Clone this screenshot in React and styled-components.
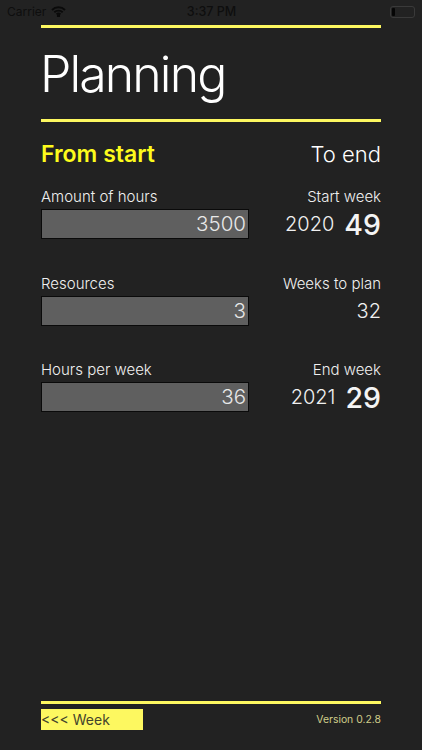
import React from "react";
import styled, { createGlobalStyle } from "styled-components";

const Global = createGlobalStyle`
  html, body { margin: 0; padding: 0; background: #222222; }
  body { font-family: Inter, "Liberation Sans", sans-serif; }
`;

const Screen = styled.div`
  width: 422px;
  height: 750px;
  background: #222222;
  display: flex;
  flex-direction: column;
  overflow: hidden;
`;

const StatusBar = styled.div`
  height: 25px;
  flex: none;
  padding: 0 6px 2px 7px;
  box-sizing: border-box;
  display: grid;
  grid-template-columns: 1fr auto 1fr;
  align-items: center;
  font-size: 12px;
  color: #0e0e0e;
`;

const StatusLeft = styled.div`
  display: flex;
  align-items: center;
  gap: 5px;
`;

const StatusRight = styled.div`
  display: flex;
  justify-content: flex-end;
`;

const Clock = styled.div`
  font-weight: 500;
  font-size: 12.5px;
`;

const Battery = styled.div`
  width: 21px;
  height: 8px;
  border: 1px solid #3a3a3a;
  border-radius: 3px;
  padding: 1px;
  display: flex;
  margin-right: 1px;
  &::before {
    content: "";
    width: 3px;
    background: #050505;
    border-radius: 1px;
  }
`;

const Content = styled.div`
  flex: 1;
  padding: 0 41px;
  display: flex;
  flex-direction: column;
`;

const Rule = styled.div`
  height: 3px;
  flex: none;
  background: #fdf860;
`;

const Title = styled.h1`
  margin: 0 0 0 -1px;
  height: 91px;
  display: flex;
  align-items: center;
  font-size: 50px;
  font-weight: 300;
  color: #ffffff;
  letter-spacing: -1.9px;
`;

const Tabs = styled.div`
  display: flex;
  justify-content: space-between;
  align-items: center;
  height: 24px;
  margin-top: 20px;
`;

const Tab = styled.div`
  font-size: ${(p) => (p.$active ? "23px" : "22px")};
  font-weight: ${(p) => (p.$active ? 600 : 300)};
  color: ${(p) => (p.$active ? "#fdfb1c" : "#ffffff")};
`;

const Rows = styled.div`
  display: flex;
  flex-direction: column;
  gap: 36.5px;
  margin-top: 22px;
`;

const Row = styled.div`
  display: grid;
  grid-template-columns: 208px 1fr;
  height: 50px;
`;

const Col = styled.div`
  display: flex;
  flex-direction: column;
  gap: 3px;
`;

const Label = styled.div`
  font-size: 15px;
  font-weight: 300;
  line-height: 18px;
  color: #f0f0f0;
  text-align: ${(p) => (p.$right ? "right" : "left")};
`;

const Field = styled.div`
  height: 28px;
  background: #5f5f5f;
  border: 1px solid #0a0a0a;
  color: #e8e8e8;
  font-size: 20.5px;
  font-weight: 300;
  line-height: 28px;
  text-align: right;
  padding-right: 2px;
`;

const Value = styled.div`
  height: 30px;
  display: flex;
  justify-content: flex-end;
  align-items: center;
  gap: 10px;
  color: #f0f0f0;
`;

const Year = styled.span`
  font-size: 20px;
  font-weight: 300;
`;

const Week = styled.span`
  font-size: 28.5px;
  font-weight: 500;
  color: #f4f4f4;
`;

const Spacer = styled.div`
  flex: 1;
`;

const Footer = styled.div`
  flex: none;
  margin-bottom: 20px;
`;

const FooterRow = styled.div`
  margin-top: 5px;
  display: flex;
  justify-content: space-between;
  align-items: center;
`;

const WeekButton = styled.div`
  width: 102px;
  height: 21px;
  background: #fdf860;
  color: #44442c;
  font-size: 14px;
  font-weight: 400;
  line-height: 21px;
`;

const Version = styled.div`
  font-size: 10.4px;
  color: #d0cd8a;
`;

const Wifi = () => (
  <svg width="15" height="11" viewBox="0 0 15 11" fill="none" stroke="#0a0a0a" strokeWidth="1.9">
    <path d="M1 4 A9.2 9.2 0 0 1 14 4" />
    <path d="M3.3 6.3 A6 6 0 0 1 11.7 6.3" />
    <path d="M5.5 8.4 A2.9 2.9 0 0 1 9.5 8.4" />
    <circle cx="7.5" cy="9.8" r="0.7" fill="#0a0a0a" />
  </svg>
);

const rows = [
  { label: "Amount of hours", field: "3500", right: "Start week", year: "2020", week: "49" },
  { label: "Resources", field: "3", right: "Weeks to plan", plain: "32" },
  { label: "Hours per week", field: "36", right: "End week", year: "2021", week: "29" },
];

export default function App() {
  return (
    <Screen>
      <Global />
      <StatusBar>
        <StatusLeft>
          Carrier <Wifi />
        </StatusLeft>
        <Clock>3:37 PM</Clock>
        <StatusRight>
          <Battery />
        </StatusRight>
      </StatusBar>
      <Content>
        <Rule />
        <Title>Planning</Title>
        <Rule />
        <Tabs>
          <Tab $active>From start</Tab>
          <Tab>To end</Tab>
        </Tabs>
        <Rows>
          {rows.map((r) => (
            <Row key={r.label}>
              <Col>
                <Label>{r.label}</Label>
                <Field>{r.field}</Field>
              </Col>
              <Col>
                <Label $right>{r.right}</Label>
                <Value>
                  {r.plain ? (
                    <Year>{r.plain}</Year>
                  ) : (
                    <>
                      <Year>{r.year}</Year>
                      <Week>{r.week}</Week>
                    </>
                  )}
                </Value>
              </Col>
            </Row>
          ))}
        </Rows>
        <Spacer />
        <Footer>
          <Rule />
          <FooterRow>
            <WeekButton>&lt;&lt;&lt; Week</WeekButton>
            <Version>Version 0.2.8</Version>
          </FooterRow>
        </Footer>
      </Content>
    </Screen>
  );
}
